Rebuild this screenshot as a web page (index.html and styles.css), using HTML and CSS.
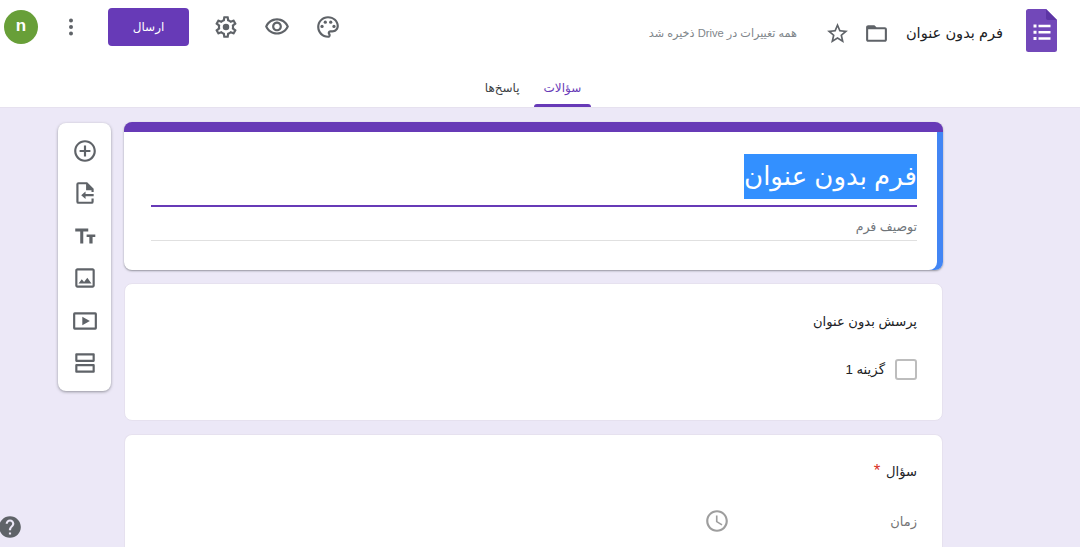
FILE: index.html
```html
<!DOCTYPE html>
<html lang="fa" dir="rtl">
<head>
    <meta charset="UTF-8">
    <meta name="viewport" content="width=device-width, initial-scale=1.0">
    <title>فرم بدون عنوان</title>
    <link rel="stylesheet" href="styles.css">
</head>
<body>

    <header class="header">
        <div class="topbar">
            <svg class="logo" viewBox="0 0 31 43">
                <path fill="#7248b9" d="M2.500 0H20l11 11v29.500a2.500 2.500 0 0 1-2.500 2.500h-26A2.500 2.500 0 0 1 0 40.500v-38A2.500 2.500 0 0 1 2.500 0z"/>
                <path fill="#5d35a5" d="M20 0l11 11H22a2 2 0 0 1-2-2z"/>
                <path fill="#fff" d="M7.500 15.500h3v3h-3zM7.500 21.800h3v3h-3zM7.500 28h3v3h-3zM12.500 15.800h12v2.400h-12zM12.500 22.100h12v2.400h-12zM12.500 28.300h12v2.400h-12z"/>
            </svg>
            <span class="doc-title">فرم بدون عنوان</span>
            <svg class="icon folder-icon" viewBox="0 0 24 24"><path d="M20 6h-8l-2-2H4c-1.100 0-1.990.9-1.990 2L2 18c0 1.100.9 2 2 2h16c1.100 0 2-.9 2-2V8c0-1.100-.9-2-2-2zm0 12H4V8h16v10z"/></svg>
            <svg class="icon star-icon" viewBox="0 0 24 24"><path d="M22 9.240l-7.190-.62L12 2 9.190 8.630 2 9.240l5.460 4.730L5.820 21 12 17.270 18.180 21l-1.630-7.030L22 9.240zM12 15.400l-3.760 2.270 1-4.280-3.320-2.880 4.380-.38L12 6.100l1.710 4.040 4.380.38-3.320 2.880 1 4.280L12 15.400z"/></svg>
            <span class="saved">همه تغییرات در Drive ذخیره شد</span>

            <div class="actions">
                <svg class="icon palette-icon" viewBox="0 0 24 24">
                    <path d="M12 22C6.490 22 2 17.510 2 12S6.490 2 12 2s10 4.040 10 9c0 3.310-2.690 6-6 6h-1.770c-.28 0-.5.22-.5.5 0 .12.05.23.13.33.41.47.64 1.060.64 1.670 0 1.380-1.120 2.500-2.500 2.500zm0-18c-4.410 0-8 3.590-8 8s3.590 8 8 8c.28 0 .5-.22.5-.5 0-.16-.08-.28-.14-.35-.41-.46-.63-1.050-.63-1.650 0-1.380 1.120-2.500 2.500-2.500H16c2.210 0 4-1.790 4-4 0-3.860-3.590-7-8-7z"/>
                    <circle cx="6.500" cy="11.500" r="1.500"/><circle cx="9.500" cy="7.500" r="1.500"/><circle cx="14.500" cy="7.500" r="1.500"/><circle cx="17.500" cy="11.500" r="1.500"/>
                </svg>
                <svg class="icon eye-icon" viewBox="0 0 24 24"><path d="M12 6c3.790 0 7.170 2.130 8.820 5.500C19.170 14.870 15.790 17 12 17s-7.170-2.130-8.820-5.500C4.830 8.130 8.210 6 12 6m0-2C7 4 2.730 7.110 1 11.500 2.730 15.890 7 19 12 19s9.270-3.110 11-7.500C21.270 7.110 17 4 12 4zm0 5c1.380 0 2.500 1.120 2.500 2.500S13.380 14 12 14s-2.500-1.120-2.500-2.500S10.620 9 12 9m0-2c-2.480 0-4.500 2.020-4.500 4.500S9.520 16 12 16s4.500-2.020 4.500-4.500S14.480 7 12 7z"/></svg>
                <svg class="icon gear-icon" viewBox="0 0 24 24"><path d="M19.430 12.980c.04-.32.07-.64.07-.98 0-.34-.03-.66-.07-.98l2.110-1.650c.19-.15.24-.42.12-.64l-2-3.460c-.09-.16-.26-.25-.44-.25-.06 0-.12.01-.17.03l-2.490 1c-.52-.4-1.080-.73-1.690-.98l-.38-2.650C14.460 2.180 14.250 2 14 2h-4c-.25 0-.46.18-.49.42l-.38 2.650c-.61.25-1.170.59-1.690.98l-2.490-1c-.06-.02-.12-.03-.18-.03-.17 0-.34.09-.43.25l-2 3.460c-.13.22-.07.49.12.64l2.110 1.650c-.04.32-.07.65-.07.98 0 .33.03.66.07.98l-2.110 1.650c-.19.15-.24.42-.12.64l2 3.460c.09.16.26.25.44.25.06 0 .12-.01.17-.03l2.490-1c.52.4 1.080.73 1.690.98l.38 2.650c.03.24.24.42.49.42h4c.25 0 .46-.18.49-.42l.38-2.650c.61-.25 1.170-.59 1.690-.98l2.490 1c.06.02.12.03.18.03.17 0 .34-.09.43-.25l2-3.460c.12-.22.07-.49-.12-.64l-2.110-1.650zm-1.980-1.710c.04.31.05.52.05.73 0 .21-.02.43-.05.73l-.14 1.130.89.7 1.080.84-.7 1.210-1.270-.51-1.040-.42-.9.68c-.43.32-.84.56-1.250.73l-1.060.43-.16 1.130-.2 1.350h-1.400l-.19-1.350-.16-1.130-1.060-.43c-.43-.18-.83-.41-1.230-.71l-.91-.7-1.060.43-1.270.51-.7-1.210 1.080-.84.89-.7-.14-1.130c-.03-.31-.05-.54-.05-.74s.02-.43.05-.73l.14-1.130-.89-.7-1.080-.84.7-1.210 1.270.51 1.040.42.9-.68c.43-.32.84-.56 1.250-.73l1.060-.43.16-1.130.2-1.350h1.390l.19 1.350.16 1.130 1.060.43c.43.18.83.41 1.230.71l.91.7 1.060-.43 1.270-.51.7 1.210-1.070.85-.89.7.14 1.130zM12 9a3 3 0 1 0 0 6 3 3 0 0 0 0-6z"/></svg>
                <button class="send-btn">ارسال</button>
                <svg class="icon dots-icon" viewBox="0 0 24 24"><circle cx="12" cy="5.500" r="2"/><circle cx="12" cy="12" r="2"/><circle cx="12" cy="18.500" r="2"/></svg>
                <div class="avatar">n</div>
            </div>
        </div>
        <nav class="tabs">
            <span class="tab active">سؤالات</span>
            <span class="tab">پاسخ‌ها</span>
        </nav>
    </header>

    <main class="content">
        <div class="cards">
            <section class="card title-card">
                <div class="title-row"><span class="title-selected">فرم بدون عنوان</span></div>
                <div class="desc">توصیف فرم</div>
            </section>

            <section class="card question-card">
                <div class="question">پرسش بدون عنوان</div>
                <div class="option">
                    <span class="checkbox"></span>
                    <span>گزینه 1</span>
                </div>
            </section>

            <section class="card question-card last-card">
                <div class="question">سؤال <span class="required">*</span></div>
                <div class="time-row">
                    <span class="time-label">زمان</span>
                    <svg class="icon clock-icon" viewBox="0 0 24 24"><path d="M11.990 2C6.470 2 2 6.480 2 12s4.470 10 9.990 10C17.520 22 22 17.520 22 12S17.520 2 11.990 2zM12 20c-4.420 0-8-3.580-8-8s3.580-8 8-8 8 3.580 8 8-3.580 8-8 8zm.5-13H11v6l5.250 3.150.75-1.230-4.500-2.670z"/></svg>
                </div>
            </section>
        </div>

        <aside class="toolbar">
            <svg class="tool" viewBox="0 0 24 24"><path d="M13 7h-2v4H7v2h4v4h2v-4h4v-2h-4V7zm-1-5C6.480 2 2 6.480 2 12s4.480 10 10 10 10-4.480 10-10S17.520 2 12 2zm0 18c-4.410 0-8-3.590-8-8s3.590-8 8-8 8 3.590 8 8-3.590 8-8 8z"/></svg>
            <svg class="tool" viewBox="0 0 24 24"><path d="M6 2h8l6 6v3h-2V9.500h-5V4H6v16h12v-3h2v3a2 2 0 0 1-2 2H6a2 2 0 0 1-2-2V4a2 2 0 0 1 2-2z"/><path d="M14.500 4.500l4 4h-4z"/><path d="M20 13h-7.500v-2.500L8.500 14l4 3.500V15H20z"/></svg>
            <svg class="tool" viewBox="0 0 24 24"><path d="M3 5h12v2.800h-4.600V19H7.600V7.800H3zM13.500 10.500h8V13H19v6h-3v-6h-2.500z"/></svg>
            <svg class="tool" viewBox="0 0 24 24"><path d="M19 5v14H5V5h14m0-2H5c-1.100 0-2 .9-2 2v14c0 1.100.9 2 2 2h14c1.100 0 2-.9 2-2V5c0-1.100-.9-2-2-2zm-4.860 8.860l-3 3.870L9 13.140 6 17h12l-3.860-5.140z"/></svg>
            <svg class="tool" viewBox="0 0 24 24"><path d="M2.500 4h19A1.500 1.500 0 0 1 23 5.500v13a1.500 1.500 0 0 1-1.500 1.500h-19A1.500 1.500 0 0 1 1 18.500v-13A1.500 1.500 0 0 1 2.500 4zM3 6v12h18V6z"/><path d="M9.500 8l7 4-7 4z"/></svg>
            <svg class="tool" viewBox="0 0 24 24"><path d="M4 3h16a1 1 0 0 1 1 1v6a1 1 0 0 1-1 1H4a1 1 0 0 1-1-1V4a1 1 0 0 1 1-1zM5 5v4h14V5zM4 13h16a1 1 0 0 1 1 1v6a1 1 0 0 1-1 1H4a1 1 0 0 1-1-1v-6a1 1 0 0 1 1-1zM5 15v4h14v-4z"/></svg>
        </aside>
    </main>

    <svg class="help" viewBox="0 0 24 24"><path d="M12 2C6.480 2 2 6.480 2 12s4.480 10 10 10 10-4.480 10-10S17.520 2 12 2zm1 17h-2v-2h2v2zm2.070-7.750l-.9.92C13.450 12.900 13 13.500 13 15h-2v-.5c0-1.100.45-2.100 1.170-2.830l1.240-1.260c.37-.36.59-.86.59-1.410 0-1.100-.9-2-2-2s-2 .9-2 2H8c0-2.210 1.790-4 4-4s4 1.790 4 4c0 .88-.36 1.680-.93 2.250z"/></svg>

</body>
</html>
```

FILE: styles.css
```css
html, body {
    height: 100%;
}
body {
    margin: 0;
    overflow: hidden;
    font-family: "Liberation Sans", "DejaVu Sans", sans-serif;
    background-color: #ece8f7;
    color: #202124;
}
.header {
    box-sizing: border-box;
    height: 108px;
    background-color: #fff;
    border-bottom: 1px solid #e6e1ef;
}
.topbar {
    display: flex;
    align-items: center;
    height: 61px;
    padding-right: 23px;
    padding-left: 4px;
}
.logo {
    width: 31px;
    height: 43px;
    flex: none;
}
.doc-title {
    margin-top: 4px;
    margin-right: 23px;
    font-size: 14.6px;
}
.icon {
    fill: #5f6368;
    flex: none;
}
.folder-icon {
    width: 25px;
    height: 25px;
    margin-top: 6px;
    margin-right: 17px;
}
.star-icon {
    width: 25px;
    height: 25px;
    margin-top: 6px;
    margin-right: 14px;
}
.saved {
    margin-top: 6px;
    margin-right: 28px;
    font-size: 11.2px;
    color: #80868b;
}
.actions {
    display: flex;
    align-items: center;
    margin-right: auto;
    margin-bottom: 8px;
}
.palette-icon, .eye-icon, .gear-icon {
    width: 26px;
    height: 26px;
    margin-left: 25px;
}
.gear-icon {
    margin-left: 24px;
}
.send-btn {
    width: 81px;
    height: 38px;
    margin-left: 25px;
    background-color: #673ab7;
    color: #fff;
    font-family: inherit;
    font-size: 12px;
    border: 0;
    border-radius: 4px;
}
.dots-icon {
    width: 24px;
    height: 24px;
    margin-left: 21px;
}
.avatar {
    width: 34px;
    height: 34px;
    border-radius: 50%;
    background-color: #689f38;
    color: #fff;
    font-size: 17px;
    font-weight: bold;
    line-height: 32px;
    text-align: center;
}
.tabs {
    display: flex;
    justify-content: center;
    height: 46px;
    padding-right: 18px;
}
.tab {
    display: flex;
    flex-direction: column;
    height: 46px;
    box-sizing: border-box;
    padding: 17px 10px 0;
    margin-left: 4px;
    font-size: 12px;
    line-height: 20px;
    color: #3c4043;
}
.tab::after {
    content: "";
    height: 3px;
    margin: auto -10px 0;
    border-radius: 3px 3px 0 0;
}
.tab.active {
    color: #673ab7;
}
.tab.active::after {
    background-color: #673ab7;
}
.content {
    display: flex;
    align-items: flex-start;
    gap: 13px;
    padding: 14px 137px 0 0;
}
.cards {
    display: flex;
    flex-direction: column;
    gap: 13px;
    width: 819px;
    flex: none;
}
.card {
    box-sizing: border-box;
    background-color: #fff;
    border: 1px solid #e6e1ef;
    border-radius: 8px;
}
.title-card {
    height: 148px;
    padding: 22px 26px 0 27px;
    border: 0;
    border-top: 10px solid #673ab7;
    box-shadow: inset -6px 0 0 #4285f4, 0 1px 2px rgba(60, 64, 67, 0.5);
}
.title-row {
    height: 51px;
    border-bottom: 2px solid #673ab7;
}
.title-selected {
    display: inline-block;
    height: 45px;
    background-color: #3390ff;
    color: #fff;
    font-size: 26px;
    line-height: 45px;
}
.desc {
    height: 33px;
    line-height: 40px;
    font-size: 12.5px;
    color: #70757a;
    border-bottom: 1px solid #e0e0e0;
}
.question-card {
    height: 138px;
    padding: 28px 25px 0;
}
.last-card {
    height: 113px;
    padding-top: 27px;
    border-bottom: 0;
    border-radius: 8px 8px 0 0;
}
.question {
    font-size: 13.1px;
    line-height: 20px;
}
.required {
    margin-right: 2px;
    color: #d93025;
    font-size: 17px;
    line-height: 1;
}
.option {
    display: flex;
    align-items: center;
    gap: 10px;
    margin-top: 27px;
    font-size: 13.3px;
}
.checkbox {
    box-sizing: border-box;
    width: 22px;
    height: 21px;
    border: 2px solid #bdbdbd;
    border-radius: 3px;
}
.time-row {
    display: flex;
    justify-content: space-between;
    align-items: center;
    margin-top: 26px;
    padding-left: 554px;
    font-size: 13px;
    color: #757575;
}
.clock-icon {
    width: 26px;
    height: 26px;
    fill: #9e9e9e;
}
.toolbar {
    display: flex;
    flex-direction: column;
    align-items: center;
    gap: 16.4px;
    box-sizing: border-box;
    width: 53px;
    height: 268px;
    flex: none;
    margin-top: 1px;
    padding-top: 15px;
    background-color: #fff;
    border-radius: 8px;
    box-shadow: 0 1px 3px rgba(60, 64, 67, 0.5);
}
.tool {
    width: 26px;
    height: 26px;
    flex: none;
    fill: #5f6368;
}
.help {
    position: fixed;
    left: -3px;
    bottom: 7px;
    width: 26px;
    height: 26px;
    fill: #5f6368;
}
```
